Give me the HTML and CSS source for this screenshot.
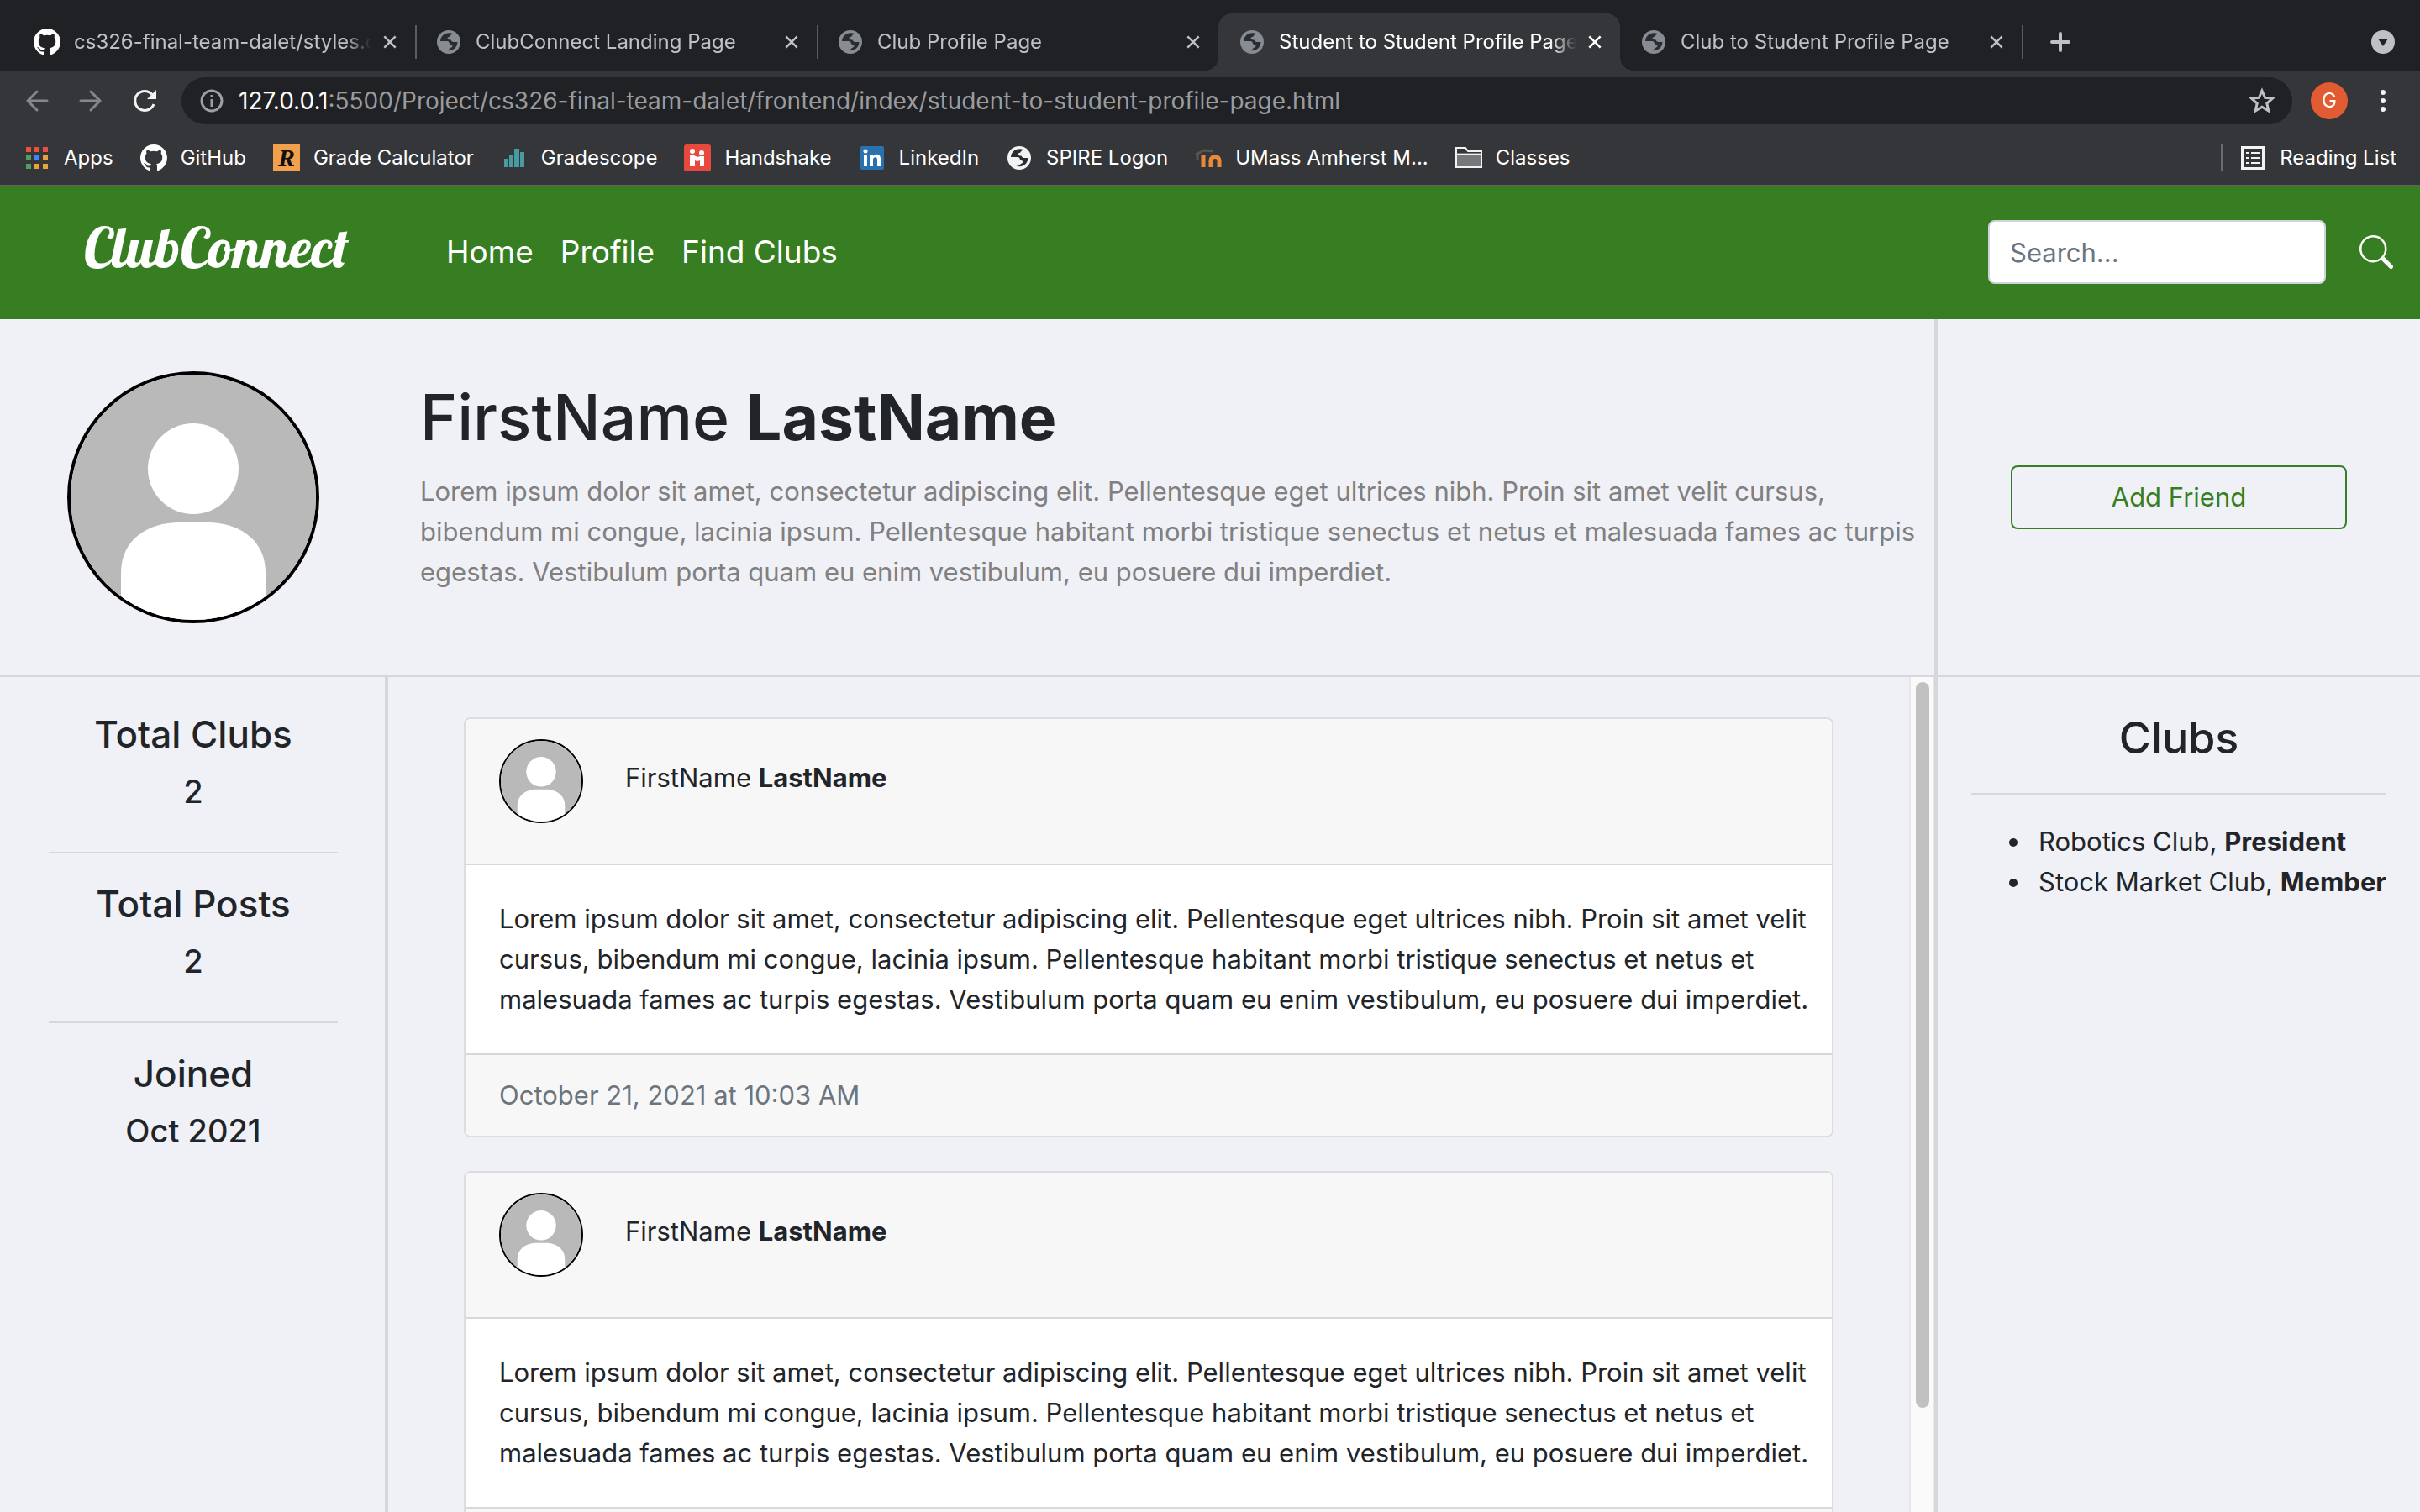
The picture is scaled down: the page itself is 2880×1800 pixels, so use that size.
FILE: index.html
```html
<!DOCTYPE html>
<html lang="en">
<head>
<meta charset="utf-8">
<title>Student to Student Profile Page</title>
<link rel="stylesheet" href="styles.css">
</head>
<body>
<svg class="defs" aria-hidden="true">
  <symbol id="github" viewBox="0 0 16 16"><path fill="currentColor" d="M8 0C3.58 0 0 3.58 0 8c0 3.54 2.29 6.53 5.47 7.59.4.07.55-.17.55-.38 0-.19-.01-.82-.01-1.49-2.01.37-2.53-.49-2.69-.94-.09-.23-.48-.94-.82-1.13-.28-.15-.68-.52-.01-.53.63-.01 1.08.58 1.23.82.72 1.21 1.87.87 2.33.66.07-.52.28-.87.51-1.07-1.78-.2-3.64-.89-3.64-3.95 0-.87.31-1.59.82-2.15-.08-.2-.36-1.02.08-2.12 0 0 .67-.21 2.2.82.64-.18 1.32-.27 2-.27s1.36.09 2 .27c1.53-1.04 2.2-.82 2.2-.82.44 1.1.16 1.92.08 2.12.51.56.82 1.27.82 2.15 0 3.07-1.87 3.75-3.65 3.95.29.25.54.73.54 1.48 0 1.07-.01 1.93-.01 2.2 0 .21.15.46.55.38A8.01 8.01 0 0 0 16 8c0-4.42-3.58-8-8-8z"/></symbol>
  <symbol id="globe" viewBox="0 0 28 28"><circle cx="14" cy="14" r="14" fill="currentColor"/><path fill="#2b2c30" d="M19 4C11 1.500 4.500 6 4 13h8c2 0 2.500 1 3 3 1 1.500 3 1 3.500 2.500 0 2-2.500 2-3.500 3.500s-2 1-4.500 1.500c7 2.500 13.500-2 14-9.500h-4c-3 0-3-1-4-2.500-2 0-4-.5-4-2s2-1.500 3-2c.5-1.500 1.500-2 3.500-3.500z"/></symbol>
  <symbol id="close" viewBox="0 0 24 24"><path fill="none" stroke="currentColor" stroke-width="3" d="M4 4l16 16M20 4L4 20"/></symbol>
  <symbol id="person" viewBox="4 4 292 292"><rect width="300" height="300" fill="#b9b9b9"/><circle cx="150" cy="116" r="54" fill="#fff"/><path fill="#fff" d="M64 300v-60c0-40 32-60 70-60h32c38 0 70 20 70 60v60z"/></symbol>
</svg>

<header class="browser">
  <div class="tabs">
    <div class="tab"><svg class="ico32 white"><use href="#github"/></svg><span class="tab-title">cs326-final-team-dalet/styles.css</span><button class="x" aria-label="Close tab"><svg><use href="#close"/></svg></button></div>
    <div class="tab"><svg class="ico32 globe"><use href="#globe" x="2" y="2" width="28" height="28"/></svg><span class="tab-title">ClubConnect Landing Page</span><button class="x" aria-label="Close tab"><svg><use href="#close"/></svg></button></div>
    <div class="tab before"><svg class="ico32 globe"><use href="#globe" x="2" y="2" width="28" height="28"/></svg><span class="tab-title">Club Profile Page</span><button class="x" aria-label="Close tab"><svg><use href="#close"/></svg></button></div>
    <div class="tab active"><svg class="ico32 globe"><use href="#globe" x="2" y="2" width="28" height="28"/></svg><span class="tab-title">Student to Student Profile Page</span><button class="x" aria-label="Close tab"><svg><use href="#close"/></svg></button></div>
    <div class="tab"><svg class="ico32 globe"><use href="#globe" x="2" y="2" width="28" height="28"/></svg><span class="tab-title">Club to Student Profile Page</span><button class="x" aria-label="Close tab"><svg><use href="#close"/></svg></button></div>
    <button class="new-tab" aria-label="New tab"><svg class="ico24" viewBox="0 0 24 24"><path stroke="#bdc1c6" stroke-width="4" stroke-linecap="round" d="M12 2v20M2 12h20"/></svg></button>
    <button class="tab-search" aria-label="Search tabs"><svg class="ico28" viewBox="0 0 28 28"><circle cx="14" cy="14" r="14" fill="#bdc1c6"/><path fill="#202124" d="M8 10h12l-6 9z"/></svg></button>
  </div>

  <div class="toolbar">
    <div class="nav-buttons">
      <button aria-label="Back"><svg class="ico32" viewBox="0 0 32 32"><path fill="none" stroke="#86878a" stroke-width="3" stroke-linecap="round" d="M28 16H5M16 5L5 16l11 11"/></svg></button>
      <button aria-label="Forward"><svg class="ico32" viewBox="0 0 32 32"><path fill="none" stroke="#86878a" stroke-width="3" stroke-linecap="round" d="M4 16h23M16 5l11 11-11 11"/></svg></button>
      <button aria-label="Reload"><svg class="ico32" viewBox="0 0 32 32"><path fill="none" stroke="#f1f3f4" stroke-width="3" d="M27 20A11.500 11.500 0 1 1 25 8.500"/><path fill="#f1f3f4" d="M30 3v11H19z"/></svg></button>
    </div>
    <div class="omnibox">
      <svg class="ico28" viewBox="0 0 28 28"><circle cx="14" cy="14" r="12" fill="none" stroke="#9aa0a6" stroke-width="3"/><path fill="#9aa0a6" d="M12.500 7h3v3h-3zM12.500 12h3v9h-3z"/></svg>
      <span class="url"><span class="host">127.0.0.1</span>:5500/Project/cs326-final-team-dalet/frontend/index/student-to-student-profile-page.html</span>
      <button aria-label="Bookmark this page"><svg class="ico32" viewBox="0 0 32 32"><path fill="none" stroke="#bdc1c6" stroke-width="3" d="M16 4l3.600 8.300 9 .8-6.800 6 2 8.900-7.800-4.700L8.200 28l2-8.900-6.800-6 9-.8z"/></svg></button>
    </div>
    <button class="account" aria-label="Account">G</button>
    <button aria-label="Menu"><svg class="menu" viewBox="0 0 8 28"><circle cx="4" cy="4" r="3" fill="#f1f3f4"/><circle cx="4" cy="14" r="3" fill="#f1f3f4"/><circle cx="4" cy="24" r="3" fill="#f1f3f4"/></svg></button>
  </div>

  <nav class="bookmarks" aria-label="Bookmarks">
    <a href="#"><svg class="ico32" viewBox="0 0 32 32"><path fill="#e8503f" d="M3 3h6v6H3zM13 3h6v6h-6zM23 3h6v6h-6z"/><path fill="#529e63" d="M3 13h6v6H3zM3 23h6v6H3z"/><path fill="#4285f4" d="M13 13h6v6h-6z"/><path fill="#e9a33a" d="M23 13h6v6h-6zM13 23h6v6h-6zM23 23h6v6h-6z"/></svg>Apps</a>
    <a href="#"><svg class="ico32 white"><use href="#github"/></svg>GitHub</a>
    <a href="#"><span class="ico32 grade">R</span>Grade Calculator</a>
    <a href="#"><svg class="ico32" viewBox="0 0 32 32"><path fill="#489b9e" d="M4 17h5v10H4zM10 12h5v15h-5zM16 5h6v22h-6zM23 9h5v18h-5z"/></svg>Gradescope</a>
    <a href="#"><svg class="ico32" viewBox="0 0 32 32"><rect width="32" height="32" rx="3" fill="#e8493f"/><g fill="#fff"><circle cx="10" cy="8" r="3"/><circle cx="21" cy="10" r="3"/><path d="M7 13h5l4 2 3-1h5v12h-5v-7l-3 1-3-1v7H7z"/></g></svg>Handshake</a>
    <a href="#"><svg class="ico32" viewBox="0 0 32 32"><rect x="2" y="2" width="28" height="28" rx="2" fill="#2a71b0"/><g fill="#fff"><circle cx="8" cy="8" r="2.500"/><path d="M6 12h4v14H6zM13 12h4v2c2-3.500 9-3 9 3v9h-4v-8c0-4-5-3-5 0v8h-4z"/></g></svg>LinkedIn</a>
    <a href="#"><svg class="ico32 light"><use href="#globe" x="2" y="2" width="28" height="28"/></svg>SPIRE Logon</a>
    <a href="#"><svg class="ico32" viewBox="0 0 32 32"><path fill="none" stroke="#5c5552" stroke-width="3" d="M1 12l10-5 11 1M3 11v7"/><path fill="none" stroke="#e98a3a" stroke-width="5" d="M10 27V13M19 27v-8c0-6 10-6 10 0v8"/></svg>UMass Amherst M...</a>
    <a href="#"><svg class="ico32" viewBox="0 0 32 32"><path fill="#77787b" d="M2 10h28v17H2z"/><path fill="none" stroke="#f1f3f4" stroke-width="2" d="M1 27V4h11l3 4h16v19zM1 12h30"/></svg>Classes</a>
    <a class="reading" href="#"><svg class="ico32" viewBox="0 0 32 32"><path fill="none" stroke="#f1f3f4" stroke-width="3" d="M3.500 3.500h25v25h-25z"/><path stroke="#f1f3f4" stroke-width="2" d="M8 10h3M14 10h10M8 16h3M14 16h10M8 22h3M14 22h10"/></svg>Reading List</a>
  </nav>
</header>

<div class="page">
  <nav class="site-nav">
    <a class="brand" href="#">ClubConnect</a>
    <div class="links"><a href="#">Home</a><a href="#">Profile</a><a href="#">Find Clubs</a></div>
    <form class="search">
      <input type="text" placeholder="Search..." aria-label="Search">
      <button type="button" aria-label="Search"><svg class="ico40" viewBox="0 0 16 16"><path fill="#fff" d="M11.742 10.344a6.500 6.500 0 1 0-1.397 1.398h-.001c.03.04.062.078.098.115l3.850 3.850a1 1 0 0 0 1.415-1.414l-3.850-3.850a1.007 1.007 0 0 0-.115-.1zM12 6.500a5.500 5.500 0 1 1-11 0 5.500 5.500 0 0 1 11 0z"/></svg></button>
    </form>
  </nav>

  <section class="profile">
    <div class="portrait"><svg class="avatar large"><use href="#person"/></svg></div>
    <div class="bio">
      <h1>FirstName <b>LastName</b></h1>
      <p>Lorem ipsum dolor sit amet, consectetur adipiscing elit. Pellentesque eget ultrices nibh. Proin sit amet velit cursus, bibendum mi congue, lacinia ipsum. Pellentesque habitant morbi tristique senectus et netus et malesuada fames ac turpis egestas. Vestibulum porta quam eu enim vestibulum, eu posuere dui imperdiet.</p>
    </div>
    <div class="action"><button class="add">Add Friend</button></div>
  </section>

  <main class="content">
    <aside class="stats">
      <h4>Total Clubs</h4><h5>2</h5><hr>
      <h4>Total Posts</h4><h5>2</h5><hr>
      <h4>Joined</h4><h5>Oct 2021</h5>
    </aside>
    <div class="feed">
      <div class="posts">
        <article class="card">
          <div class="card-head"><svg class="avatar small"><use href="#person"/></svg><span>FirstName <b>LastName</b></span></div>
          <p class="card-body">Lorem ipsum dolor sit amet, consectetur adipiscing elit. Pellentesque eget ultrices nibh. Proin sit amet velit cursus, bibendum mi congue, lacinia ipsum. Pellentesque habitant morbi tristique senectus et netus et malesuada fames ac turpis egestas. Vestibulum porta quam eu enim vestibulum, eu posuere dui imperdiet.</p>
          <div class="card-foot">October 21, 2021 at 10:03 AM</div>
        </article>
        <article class="card">
          <div class="card-head"><svg class="avatar small"><use href="#person"/></svg><span>FirstName <b>LastName</b></span></div>
          <p class="card-body">Lorem ipsum dolor sit amet, consectetur adipiscing elit. Pellentesque eget ultrices nibh. Proin sit amet velit cursus, bibendum mi congue, lacinia ipsum. Pellentesque habitant morbi tristique senectus et netus et malesuada fames ac turpis egestas. Vestibulum porta quam eu enim vestibulum, eu posuere dui imperdiet.</p>
          <div class="card-foot">October 21, 2021 at 10:03 AM</div>
        </article>
      </div>
      <div class="scrollbar"><div class="thumb"></div></div>
    </div>
    <aside class="clubs">
      <h2>Clubs</h2><hr>
      <ul>
        <li>Robotics Club, <b>President</b></li>
        <li>Stock Market Club, <b>Member</b></li>
      </ul>
    </aside>
  </main>
</div>
</body>
</html>
```
FILE: styles.css
```css
* { box-sizing: border-box; }

body {
  margin: 0;
  height: 100vh;
  overflow: hidden;
  display: flex;
  flex-direction: column;
  font-family: Inter, "Liberation Sans", sans-serif;
  font-size: 31px;
  line-height: 48px;
  color: #212529;
  background: #f0f1f6;
}

h1, h2, h4, h5, p, ul { margin: 0; font-weight: 500; }
p, ul { font-weight: 400; }
a { color: inherit; text-decoration: none; }
svg { display: block; flex: none; }
button { border: 0; padding: 0; background: none; font: inherit; color: inherit; flex: none; }

hr { width: 100%; height: 2px; margin: 32px 0; border: 0; background: #d5d7dc; }

.defs { position: absolute; width: 0; height: 0; }
.ico24 { width: 24px; height: 24px; }
.ico28 { width: 28px; height: 28px; }
.ico32 { width: 32px; height: 32px; flex: none; }
.ico40 { width: 40px; height: 40px; }
.white { color: #fff; }
.light { color: #f1f3f4; }
.globe { color: #868c92; }

/* Browser window */
.browser {
  background: #35363a;
  border-bottom: 2px solid #606165;
  font-size: 24px;
  line-height: 32px;
  color: #fff;
}

.tabs {
  display: flex;
  align-items: center;
  height: 84px;
  padding: 16px 30px 0 16px;
  background: #202124;
}
.tab {
  position: relative;
  display: flex;
  align-items: center;
  width: 478px;
  height: 68px;
  padding: 0 20px 0 24px;
  color: #bdc1c6;
}
.tab::after {
  content: "";
  position: absolute;
  right: -2px;
  top: 14px;
  width: 2px;
  height: 40px;
  background: #5a5b5f;
}
.tab.before::after { display: none; }
.tab.active { color: #fff; background: #35363a; border-radius: 16px 16px 0 0; }
.tab.active::before, .tab.active::after {
  content: "";
  position: absolute;
  top: auto;
  bottom: 0;
  width: 16px;
  height: 16px;
}
.tab.active::before { left: -16px; background: radial-gradient(circle at 0 0, #202124 16px, #35363a 16px); }
.tab.active::after { right: -16px; background: radial-gradient(circle at 100% 0, #202124 16px, #35363a 16px); }
.tab-title {
  flex: 1;
  margin: 0 12px 0 16px;
  overflow: hidden;
  white-space: nowrap;
  -webkit-mask-image: linear-gradient(to left, transparent, #000 32px);
  mask-image: linear-gradient(to left, transparent, #000 32px);
}
.x svg { width: 20px; height: 20px; }
.new-tab { margin-left: 34px; }
.tab-search { margin-left: auto; }

.toolbar { display: flex; align-items: center; height: 72px; padding: 0 40px 0 28px; }
.nav-buttons { display: flex; gap: 32px; margin-right: 28px; }
.omnibox {
  flex: 1;
  display: flex;
  align-items: center;
  height: 56px;
  padding: 0 20px 0 22px;
  border-radius: 28px;
  background: #202124;
}
.url { flex: 1; margin-left: 18px; font-size: 28px; color: #9a9b9e; white-space: nowrap; }
.host { color: #fff; }
.account {
  width: 44px;
  height: 44px;
  margin: 0 38px 0 22px;
  border-radius: 50%;
  background: #e25b32;
  text-align: center;
}
.menu { width: 8px; height: 28px; }

.bookmarks { display: flex; align-items: center; gap: 32px; height: 64px; padding: 0 28px; white-space: nowrap; }
.bookmarks a { display: flex; align-items: center; gap: 16px; }
.grade {
  background: #f2a04b;
  color: #111;
  font: italic bold 30px/32px "Liberation Serif", serif;
  text-align: center;
}
.bookmarks .reading { margin-left: auto; padding-left: 20px; border-left: 2px solid #6a6b6f; }

/* Site */
.page { flex: 1; min-height: 0; display: flex; flex-direction: column; }

.site-nav {
  flex: none;
  display: flex;
  align-items: center;
  height: 158px;
  padding: 0 32px 2px 100px;
  background: #377e22;
  color: #fff;
}
.brand { font: 67px/80px Lobster, "Liberation Serif", cursive; padding-bottom: 12px; }
.links { display: flex; gap: 32px; margin-left: 116px; font-size: 37px; }
.search { display: flex; align-items: center; gap: 40px; margin-left: auto; }
.search input {
  width: 402px;
  height: 76px;
  padding: 0 24px;
  border: 2px solid #ced4da;
  border-radius: 8px;
  background: #fff;
  font: inherit;
}
.search input::placeholder { color: #6c757d; opacity: 1; }

.profile, .content { display: grid; grid-template-columns: 462px minmax(0, 1fr) 578px; }
.profile { flex: none; height: 426px; border-bottom: 2px solid #d5d7dc; }
.portrait { display: flex; align-items: center; padding-left: 80px; }
.avatar { border: 2px solid #000; border-radius: 50%; }
.large { width: 300px; height: 300px; border-width: 4px; }
.small { width: 100px; height: 100px; }
.bio { align-self: center; padding: 0 20px 30px 38px; }
.bio h1 { margin-bottom: 16px; font-size: 75px; line-height: 96px; }
.bio p { color: #808080; }
.action { display: flex; align-items: center; justify-content: center; border-left: 4px solid #d5d7dc; }
.add { width: 400px; height: 76px; border: 2px solid #377e22; border-radius: 8px; color: #377e22; }

.content { flex: 1; min-height: 0; grid-template-rows: minmax(0, 1fr); }
.stats { padding: 40px 56px 40px 58px; border-right: 4px solid #d5d7dc; text-align: center; }
.stats h4 { margin-bottom: 16px; font-size: 44px; line-height: 56px; }
.stats h5 { margin-bottom: 48px; font-size: 38px; line-height: 48px; }
.stats hr { margin-top: 0; }

.feed { display: grid; grid-template-columns: minmax(0, 1fr) 30px; grid-template-rows: minmax(0, 1fr); }
.posts { overflow: hidden; padding: 48px 90px 0; }
.card { margin-bottom: 40px; border: 2px solid #dcdddf; border-radius: 8px; background: #fff; overflow: hidden; }
.card-head {
  display: flex;
  gap: 50px;
  height: 174px;
  padding: 24px 40px;
  border-bottom: 2px solid #d8d8d8;
  background: #f7f7f7;
}
.card-head span { margin-top: 22px; }
.card-body { padding: 40px 20px 40px 40px; }
.card-foot { padding: 24px 40px; border-top: 2px solid #d8d8d8; background: #f7f7f7; color: #6c757d; }
.scrollbar { padding: 6px 4px 6px 6px; border: solid #e8e8e8; border-width: 0 2px; background: #fafafa; }
.thumb { width: 16px; height: 88%; border-radius: 8px; background: #c1c1c1; }

.clubs { padding: 40px; border-left: 4px solid #d5d7dc; }
.clubs h2 { font-size: 52px; line-height: 66px; text-align: center; }
.clubs ul { padding-left: 72px; white-space: nowrap; }
.clubs li { padding-left: 8px; }
```
